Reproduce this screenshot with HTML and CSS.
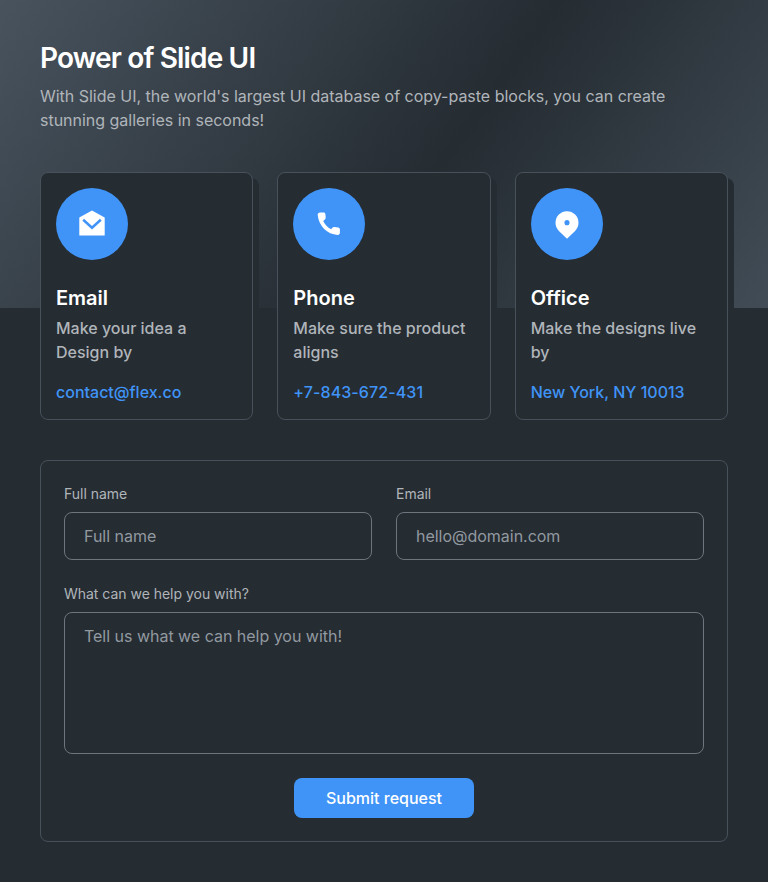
FILE: index.html
```html
<!DOCTYPE html>
<html lang="en">
<head>
<meta charset="utf-8">
<title>Power of Slide UI</title>
<link rel="stylesheet" href="styles.css">
</head>
<body>
<section class="contact">
  <header class="intro">
    <h1>Power of Slide UI</h1>
    <p>With Slide UI, the world's largest UI database of copy-paste blocks, you can create stunning galleries in seconds!</p>
  </header>
  <div class="cards">
    <article class="card">
      <div class="badge">
        <svg width="36" height="36" viewBox="0 0 36 36"><path fill="#fff" d="M18 4.600 30.700 11.600V29.600H5.300V11.600Z"/><path fill="none" stroke="#4094f7" stroke-width="2.500" d="M9.200 13.800 18 21.700 26.800 13.800"/></svg>
      </div>
      <h2>Email</h2>
      <p>Make your idea a Design by</p>
      <a>contact@flex.co</a>
    </article>
    <article class="card">
      <div class="badge">
        <svg width="36" height="36" viewBox="0 0 36 36"><path fill="#fff" d="M9 6.600h3.500c1.100 0 1.800.6 1.900 1.700l.3 3.300c.1.8-.2 1.400-.8 1.900l-1.700 1.600c1.700 3.600 4.300 6.400 7.900 8.100l1.500-1.600c.5-.6 1.100-.8 1.900-.7l3.600.5c1.100.2 1.800.9 1.800 2v3.400c0 1.300-.9 2.300-2.200 2.200C16.200 28.200 7.800 20.300 6.700 9 6.600 7.600 7.500 6.600 9 6.600Z"/></svg>
      </div>
      <h2>Phone</h2>
      <p>Make sure the product aligns</p>
      <a class="phone">+7-843-672-431</a>
    </article>
    <article class="card">
      <div class="badge">
        <svg width="36" height="36" viewBox="0 0 36 36"><path fill="#fff" fill-rule="evenodd" d="M18 32.800 9.900 24.900A11.500 11.500 0 1 1 26.100 24.900ZM18 14.100a2.550 2.550 0 1 0 0 5.100 2.550 2.550 0 0 0 0-5.100Z"/></svg>
      </div>
      <h2>Office</h2>
      <p>Make the designs live by</p>
      <a>New York, NY 10013</a>
    </article>
  </div>
  <form class="form">
    <div class="row">
      <label class="field">Full name<input type="text" placeholder="Full name"></label>
      <label class="field">Email<input type="text" placeholder="hello@domain.com"></label>
    </div>
    <label class="field">What can we help you with?<textarea placeholder="Tell us what we can help you with!"></textarea></label>
    <button type="button">Submit request</button>
  </form>
</section>
</body>
</html>
```
FILE: styles.css
```css
* { box-sizing: border-box; margin: 0; }

body {
  background: #252c32;
  color: #fff;
  font: 400 16px/24px Inter, "Liberation Sans", sans-serif;
}

.contact {
  min-height: 882px;
  padding: 40px;
  background: linear-gradient(126deg, #48535e 0%, #252c32 56.5%, #414c56 100%) no-repeat 0 0 / 100% 308px;
}

.intro { margin-bottom: 40px; }

h1 {
  font-size: 28px;
  font-weight: 600;
  line-height: 36px;
  letter-spacing: -0.84px;
  margin-bottom: 8px;
}

.intro p { color: #b0b5ba; letter-spacing: -0.015px; }

.cards {
  display: grid;
  grid-template-columns: repeat(3, 1fr);
  gap: 24px;
  margin-bottom: 40px;
}

.card {
  height: 248px;
  padding: 15px;
  background: #252c32;
  border: 1px solid #48515a;
  border-radius: 8px;
  box-shadow: 6px 6px 0 #252c32;
}

.badge {
  display: flex;
  align-items: center;
  justify-content: center;
  width: 72px;
  height: 72px;
  margin-bottom: 24px;
  border-radius: 50%;
  background: #4094f7;
}

h2 {
  font-size: 20px;
  font-weight: 600;
  line-height: 28px;
  margin-bottom: 4px;
}

.card p {
  color: #b0b5ba;
  font-weight: 500;
  margin-bottom: 16px;
}

.card a { color: #4094f7; font-weight: 500; }

.card .phone { letter-spacing: 0.1px; }

.form {
  display: flex;
  flex-direction: column;
  gap: 24px;
  height: 382px;
  padding: 23px;
  border: 1px solid #48515a;
  border-radius: 8px;
}

.row {
  display: grid;
  grid-template-columns: 1fr 1fr;
  gap: 24px;
}

.field {
  display: flex;
  flex-direction: column;
  gap: 8px;
  color: #b0b5ba;
  font-size: 14px;
  line-height: 20px;
  letter-spacing: -0.02px;
}

input, textarea {
  display: block;
  width: 100%;
  height: 48px;
  padding: 11px 19px;
  border: 1px solid #6e757c;
  border-radius: 8px;
  background: transparent;
  color: #fff;
  font: 400 16px/24px Inter, sans-serif;
  letter-spacing: -0.02px;
  outline: 0;
}

textarea { height: 142px; resize: none; }

::placeholder { color: #9299a0; opacity: 1; }

button {
  align-self: center;
  width: 180px;
  height: 40px;
  border: 0;
  border-radius: 8px;
  background: #4094f7;
  color: #fff;
  font: 500 16px/24px Inter, sans-serif;
}
```
